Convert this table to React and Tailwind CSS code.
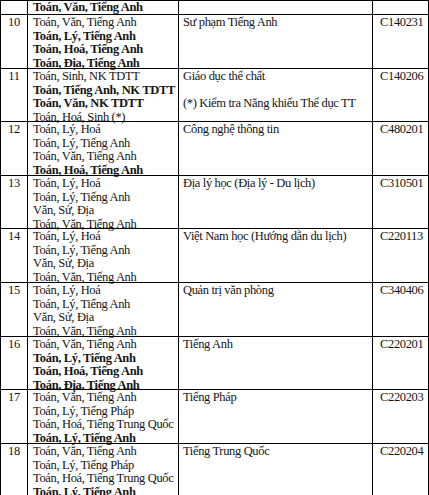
const rows = [
  {
    no: "10",
    subjects: [
      ["Toán, Văn, Tiếng Anh", false],
      ["Toán, Lý, Tiếng Anh", true],
      ["Toán, Hoá, Tiếng Anh", true],
      ["Toán, Địa, Tiếng Anh", true],
    ],
    name: ["Sư phạm Tiếng Anh"],
    code: "C140231",
    h: "h-[54px]",
  },
  {
    no: "11",
    subjects: [
      ["Toán, Sinh, NK TDTT", false],
      ["Toán, Tiếng Anh, NK TDTT", true],
      ["Toán, Văn, NK TDTT", true],
      ["Toán, Hoá, Sinh (*)", false],
    ],
    name: ["Giáo dục thể chất", "", "(*) Kiểm tra Năng khiếu Thể dục TT"],
    code: "C140206",
    h: "h-[53px]",
  },
  {
    no: "12",
    subjects: [
      ["Toán, Lý, Hoá", false],
      ["Toán, Lý, Tiếng Anh", false],
      ["Toán, Văn, Tiếng Anh", false],
      ["Toán, Hoá, Tiếng Anh", true],
    ],
    name: ["Công nghệ thông tin"],
    code: "C480201",
    h: "h-[54px]",
  },
  {
    no: "13",
    subjects: [
      ["Toán, Lý, Hoá", false],
      ["Toán, Lý, Tiếng Anh", false],
      ["Văn, Sử, Địa", false],
      ["Toán, Văn, Tiếng Anh", false],
    ],
    name: ["Địa lý học (Địa lý - Du lịch)"],
    code: "C310501",
    h: "h-[53px]",
  },
  {
    no: "14",
    subjects: [
      ["Toán, Lý, Hoá", false],
      ["Toán, Lý, Tiếng Anh", false],
      ["Văn, Sử, Địa", false],
      ["Toán, Văn, Tiếng Anh", false],
    ],
    name: ["Việt Nam học (Hướng dẫn du lịch)"],
    code: "C220113",
    h: "h-[54px]",
  },
  {
    no: "15",
    subjects: [
      ["Toán, Lý, Hoá", false],
      ["Toán, Lý, Tiếng Anh", false],
      ["Văn, Sử, Địa", false],
      ["Toán, Văn, Tiếng Anh", false],
    ],
    name: ["Quản trị văn phòng"],
    code: "C340406",
    h: "h-[54px]",
  },
  {
    no: "16",
    subjects: [
      ["Toán, Văn, Tiếng Anh", false],
      ["Toán, Lý, Tiếng Anh", true],
      ["Toán, Hoá, Tiếng Anh", true],
      ["Toán, Địa, Tiếng Anh", true],
    ],
    name: ["Tiếng Anh"],
    code: "C220201",
    h: "h-[53px]",
  },
  {
    no: "17",
    subjects: [
      ["Toán, Văn, Tiếng Anh", false],
      ["Toán, Lý, Tiếng Pháp", false],
      ["Toán, Hoá, Tiếng Trung Quốc", false],
      ["Toán, Lý, Tiếng Anh", true],
    ],
    name: ["Tiếng Pháp"],
    code: "C220203",
    h: "h-[54px]",
  },
  {
    no: "18",
    subjects: [
      ["Toán, Văn, Tiếng Anh", false],
      ["Toán, Lý, Tiếng Pháp", false],
      ["Toán, Hoá, Tiếng Trung Quốc", false],
      ["Toán, Lý, Tiếng Anh", true],
    ],
    name: ["Tiếng Trung Quốc"],
    code: "C220204",
    h: "h-[54px]",
  },
];

function Row({ row }) {
  return (
    <div className={`flex border-b border-black ${row.h}`}>
      <div className="w-[27px] shrink-0 border-r border-black pt-[1px] text-center">{row.no}</div>
      <div className="w-[151px] shrink-0 border-r border-black pl-[5px] pt-[1px]">
        {row.subjects.map(([t, b], i) => (
          <div key={i} className={b ? "font-bold" : ""}>{t}</div>
        ))}
      </div>
      <div className="w-[194px] shrink-0 border-r border-black pl-[4px] pt-[1px]">
        {row.name.map((t, i) => (
          <div key={i} className="h-[13.5px]">{t}</div>
        ))}
      </div>
      <div className="w-[56px] shrink-0 border-r border-black pl-[7px] pt-[1px]">{row.code}</div>
    </div>
  );
}

export default function App() {
  return (
    <div className="w-[429px] h-[495px] overflow-hidden bg-white text-[#151515] font-['Liberation_Serif',serif] text-[12.5px] leading-[13.5px] tracking-[-0.35px] whitespace-nowrap">
      <div className="border-t border-l border-black">
        <div className="flex border-b border-black h-[14px]">
          <div className="w-[27px] shrink-0 border-r border-black"></div>
          <div className="w-[151px] shrink-0 border-r border-black pl-[5px] font-bold leading-[13px]">
            Toán, Văn, Tiếng Anh
          </div>
          <div className="w-[194px] shrink-0 border-r border-black"></div>
          <div className="w-[56px] shrink-0 border-r border-black"></div>
        </div>
        {rows.map((r) => (
          <Row key={r.no} row={r} />
        ))}
      </div>
    </div>
  );
}
